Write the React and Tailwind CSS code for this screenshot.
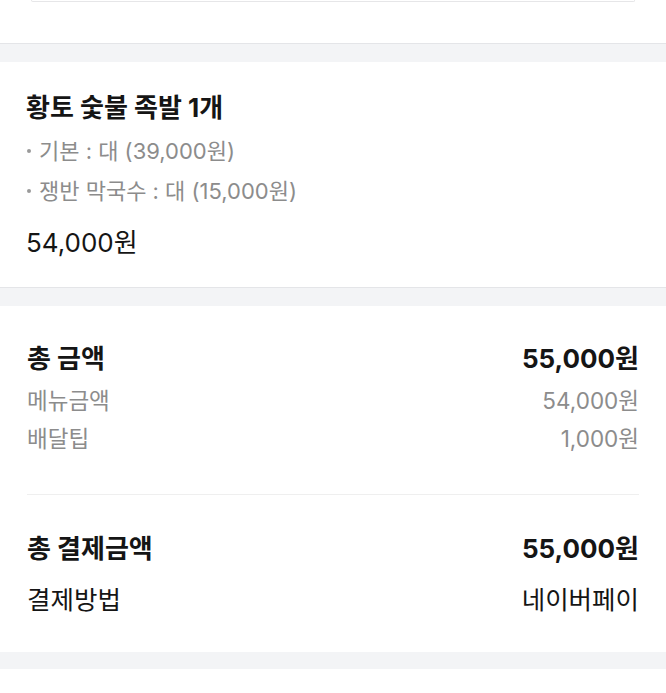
import React from 'react';

const font = { fontFamily: 'Inter, "Noto Sans CJK KR", "Noto Sans", sans-serif' };

const sizes = {
  bold: 'text-[26px] font-bold text-[#151515]',
  muted: 'text-[22.5px] text-[#8c8c8c]',
  plain: 'text-[25.5px] text-[#151515]',
};

const Row = ({ label, value, kind = 'plain', className = '' }) => (
  <div className={`flex items-center justify-between ${className}`}>
    <span className={sizes[kind]}>{label}</span>
    <span className={sizes[kind]}>{value}</span>
  </div>
);

export default function App() {
  return (
    <div className="min-h-screen bg-white" style={font}>
      {/* tail of the card above */}
      <div className="h-[43px] bg-white">
        <div className="mx-[31px] h-[2px] rounded-b-md border-x border-b border-[#e6e6e8]" />
      </div>

      <div className="h-[19px] border-t border-[#e4e5e8] bg-[#f3f4f6]" />

      {/* order item */}
      <section className="bg-white px-[26px] pt-[31px] pb-[29px]">
        <h2 className="text-[26px] font-bold leading-[30px] text-[#151515]">황토 숯불 족발 1개</h2>
        <ul className="mt-[8px] text-[22px] leading-[40px] text-[#8c8c8c]">
          <li className="flex items-center">
            <span className="mr-[8px] ml-[1px] inline-block h-[4px] w-[4px] rounded-full bg-[#9a9a9a]" />
            기본 : 대 (39,000원)
          </li>
          <li className="flex items-center">
            <span className="mr-[8px] ml-[1px] inline-block h-[4px] w-[4px] rounded-full bg-[#9a9a9a]" />
            쟁반 막국수 : 대 (15,000원)
          </li>
        </ul>
        <p className="mt-[17px] text-[26px] leading-[30px] text-[#151515]">54,000원</p>
      </section>

      <div className="h-[19px] border-t border-[#e4e5e8] bg-[#f3f4f6]" />

      {/* totals */}
      <section className="bg-white px-[27px] pt-[37px] pb-[37px]">
        <Row label="총 금액" value="55,000원" kind="bold" className="h-[30px]" />
        <div className="mt-[9px]">
          <Row label="메뉴금액" value="54,000원" kind="muted" className="h-[38px]" />
          <Row label="배달팁" value="1,000원" kind="muted" className="h-[38px]" />
        </div>
        <div className="mt-[36px] h-px bg-[#efefef]" />
        <Row label="총 결제금액" value="55,000원" kind="bold" className="mt-[38px] h-[30px]" />
        <Row label="결제방법" value="네이버페이" className="mt-[22px] h-[30px]" />
      </section>

      <div className="h-[17px] bg-[#f3f4f6]" />
      <div className="h-[40px] bg-white" />
    </div>
  );
}
